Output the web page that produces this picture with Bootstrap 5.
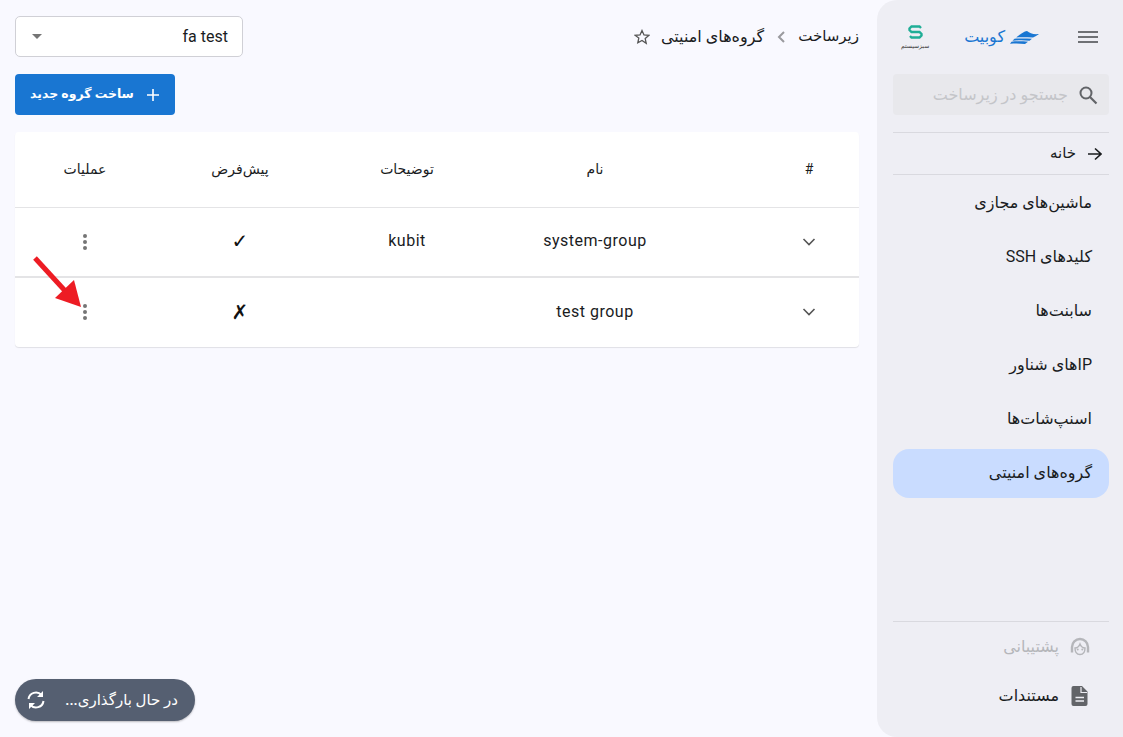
<!DOCTYPE html>
<html lang="fa" dir="rtl">
<head>
  <meta charset="UTF-8" />
  <meta name="viewport" content="width=device-width, initial-scale=1.0"/>
  <title>گروه‌های امنیتی</title>
  <link href="https://cdn.jsdelivr.net/npm/bootstrap@5.3.3/dist/css/bootstrap.min.css" rel="stylesheet">
  <style>
    html, body { height: 100%; }
    body { background: #f9f9ff; color: #1a1c1e; font-family: Roboto, "DejaVu Sans", sans-serif; font-size: 14px; overflow: hidden; }
    .app-shell { height: 737px; position: relative; }
    .side-panel { width: 246px; flex: none; background: #eeeef4; border-top-left-radius: 20px; border-bottom-left-radius: 20px; padding: 0 14px 17px 16px; }
    .side-head { height: 74px; }
    .menu-btn { margin-right: 11px; margin-left: 39px; }
    .brand-name { color: #1976d2; font-weight: 500; font-size: 16px; white-space: nowrap; }
    .partner-logo { margin-right: 37px; width: 24px; }
    .partner-name { font-size: 6px; line-height: 6px; color: #333; white-space: nowrap; }
    .search-box { height: 41px; background: #e8e8ec; border-radius: 4px; padding: 0 11px; gap: 10px; color: #c4c5c9; font-size: 16px; white-space: nowrap; }
    .side-rule { border-top: 1px solid #d9d9df; }
    .home-link { height: 41px; padding-right: 7px; gap: 11px; font-size: 15px; color: #1a1c1e; }
    .side-nav { margin-top: -1px; }
    .side-item { display: block; height: 49px; line-height: 48px; margin: 5px 0; padding-right: 17px; border-radius: 16px; color: #1a1c1e; font-size: 16px; text-decoration: none; }
    .side-item.is-active { background: #c9dcff; }
    .foot-row { height: 48px; padding-right: 19px; gap: 11px; font-size: 16px; color: #1a1c1e; }
    .foot-row.is-off { color: #b5b6ba; height: 50px; }
    .main-pane { padding: 16px 18px 0 15px; min-width: 0; }
    .top-bar { height: 41px; }
    .crumb-text { font-size: 15px; color: #1a1c1e; gap: 13px; }
    .crumb-now { font-size: 16px; }
    .crumb-star { margin-right: -2px; }
    .scope-select { width: 228px; height: 41px; background: #fff; border: 1px solid #d0d0d6; border-radius: 5px; padding: 0 14px; font-size: 16px; }
    .caret-down { width: 0; height: 0; border-left: 5px solid transparent; border-right: 5px solid transparent; border-top: 5px solid #757575; margin-left: 2px; }
    .new-btn { width: 160px; height: 41px; background: #1976d2; border: 0; border-radius: 4px; color: #fff; font-size: 12.500px; font-weight: 600; margin-top: 17px; margin-bottom: 17px; padding: 0; white-space: nowrap; gap: 12px; }
    .new-btn:hover { background: #1976d2; color: #fff; }
    .group-card { background: #fff; border-radius: 4px; box-shadow: 0 1px 1px rgba(0,0,0,.1); overflow: hidden; }
    .group-table { table-layout: fixed; margin: 0; width: 844px; font-size: 16px; --bs-table-bg: transparent; color: #1a1c1e; }
    .group-table th { height: 75px; font-weight: 400; font-size: 14px; vertical-align: middle; text-align: center; padding: 0; border-bottom: 1px solid #e4e4e6; }
    .group-table td { height: 70px; vertical-align: middle; text-align: center; padding: 0 0 2px; border-bottom: 2px solid #e4e4e6; }
    .group-table tr:last-child td { border-bottom: 0; }
    .group-table .col-index { padding-left: 58px; }
    .latin-cell { letter-spacing: .5px; }
    .mark-cell { font-family: "DejaVu Sans", sans-serif; font-size: 20px; color: #111; }
    .status-pill { position: absolute; left: 15px; top: 679px; width: 180px; height: 42px; background: #555f71; border-radius: 21px; color: #fff; font-size: 15px; font-weight: 500; padding: 0 17px 0 11px; box-shadow: 0 1px 2px rgba(0,0,0,.25); white-space: nowrap; }
    .red-arrow { position: absolute; left: 30px; top: 253px; }
  </style>
</head>
<body>
  <div class="app-shell d-flex">
    <aside class="side-panel d-flex flex-column">
      <div class="side-head d-flex align-items-center">
        <svg class="menu-btn" width="20" height="14" viewBox="0 0 20 14"><path d="M0 2h20M0 7h20M0 12h20" stroke="#6f7175" stroke-width="2"/></svg>
        <div class="d-flex align-items-center gap-1">
          <svg width="30" height="15" viewBox="0 0 30 15"><path d="M30 4C24 4.500 21 3.500 18 1 15 1.500 13 3 11 4.500L7 7.500c6-.5 12 0 17 0 2-1 4-2 6-3.500z" fill="#1976d2"/><path d="M5.500 8.700c6-.5 12-.2 17.500 0l-2.500 2C15 10 10 10 3.500 10.700zM2.500 11.700c5-.5 10-.5 16.500 0L16 14c-5-.7-10-.7-15-.3z" fill="#1976d2"/></svg>
          <span class="brand-name">کوبیت</span>
        </div>
        <div class="partner-logo d-flex flex-column align-items-center">
          <svg width="15" height="14" viewBox="0 0 15 14"><path d="M13 3 11.500 1.500H3.500L1.500 3.500v1.500L3.500 7h8l2 2v1.500l-2 2H3.500L2 11" fill="none" stroke="#1fae96" stroke-width="2.400"/></svg>
          <span class="partner-name mt-1">سبزسیستم</span>
        </div>
      </div>
      <div class="search-box d-flex align-items-center">
        <svg width="20" height="20" viewBox="0 0 20 20"><circle cx="8" cy="8" r="5.500" fill="none" stroke="#626468" stroke-width="2"/><path d="m12 12 6.500 6.500" stroke="#626468" stroke-width="2.200"/></svg>
        <span>جستجو در زیرساخت</span>
      </div>
      <div class="side-rule" style="margin-top:17px"></div>
      <div class="home-link d-flex align-items-center">
        <svg width="15" height="14" viewBox="0 0 15 14"><path d="M1 7h13M8 1.500 14 7l-6 5.500" fill="none" stroke="#1a1c1e" stroke-width="1.600"/></svg>
        <span>خانه</span>
      </div>
      <div class="side-rule"></div>
      <nav class="side-nav flex-grow-1">
        <a class="side-item" href="#">ماشین‌های مجازی</a>
        <a class="side-item" href="#">کلیدهای SSH</a>
        <a class="side-item" href="#">سابنت‌ها</a>
        <a class="side-item" href="#">IPهای شناور</a>
        <a class="side-item" href="#">اسنپ‌شات‌ها</a>
        <a class="side-item is-active" href="#">گروه‌های امنیتی</a>
      </nav>
      <div class="side-rule"></div>
      <div>
        <div class="foot-row is-off d-flex align-items-center">
          <svg width="20" height="20" viewBox="0 0 20 20"><path d="M2 15.500V10a8 8 0 0 1 16 0v5.500" fill="none" stroke="#b5b6ba" stroke-width="2.400"/><path d="M5 11c2 0 4-1.500 5-4 1 2.500 3 4 5 4 0 4-2 6.500-5 6.500S5 15 5 11z" fill="none" stroke="#b5b6ba" stroke-width="1.400"/><circle cx="7.700" cy="12.500" r="1" fill="#b5b6ba"/><circle cx="12.300" cy="12.500" r="1" fill="#b5b6ba"/></svg>
          <span>پشتیبانی</span>
        </div>
        <div class="foot-row d-flex align-items-center">
          <svg width="20" height="20" viewBox="0 0 20 20"><path d="M3.500 0H12l5.500 5.500V18a2 2 0 0 1-2 2h-12a2 2 0 0 1-2-2V2a2 2 0 0 1 2-2z" fill="#626468"/><path d="M11 1v5.500h6" fill="none" stroke="#eeeef4" stroke-width="1.200"/><path d="M5.500 11.500h8.500M5.500 15h8.500" stroke="#eeeef4" stroke-width="1.600"/></svg>
          <span>مستندات</span>
        </div>
      </div>
    </aside>

    <main class="main-pane flex-grow-1">
      <div class="top-bar d-flex align-items-center justify-content-between">
        <div class="crumb-text d-flex align-items-center">
          <span>زیرساخت</span>
          <svg width="8" height="12" viewBox="0 0 8 12"><path d="M7 1 2 6l5 5" fill="none" stroke="#9a9a9e" stroke-width="2"/></svg>
          <span class="crumb-now">گروه‌های امنیتی</span>
          <svg class="crumb-star" width="16" height="16" viewBox="0 0 16 16"><path d="m8 1.500 2 4.400 4.800.5-3.600 3.200 1 4.700L8 11.400 3.800 13.800l1-4.700L1.200 6.400 6 5.900z" fill="none" stroke="#555" stroke-width="1.300"/></svg>
        </div>
        <div class="scope-select d-flex align-items-center justify-content-between">
          <span>fa test</span>
          <span class="caret-down"></span>
        </div>
      </div>
      <div class="d-flex justify-content-end">
        <button class="btn new-btn d-flex align-items-center justify-content-center" type="button">
          <svg width="14" height="14" viewBox="0 0 14 14"><path d="M7 1v12M1 7h12" stroke="#fff" stroke-width="1.600"/></svg>
          <span>ساخت گروه جدید</span>
        </button>
      </div>
      <div class="group-card">
        <table class="table group-table">
          <colgroup>
            <col style="width:158px"><col style="width:212px"><col style="width:164px"><col style="width:170px"><col style="width:140px">
          </colgroup>
          <thead>
            <tr><th class="col-index">#</th><th>نام</th><th>توضیحات</th><th>پیش‌فرض</th><th>عملیات</th></tr>
          </thead>
          <tbody>
            <tr>
              <td class="col-index"><svg width="14" height="8" viewBox="0 0 14 8"><path d="m1.500 1 5.500 5.500L12.500 1" fill="none" stroke="#555" stroke-width="1.600"/></svg></td>
              <td class="latin-cell">system-group</td>
              <td class="latin-cell">kubit</td>
              <td class="mark-cell">✓</td>
              <td><svg width="6" height="18" viewBox="0 0 6 18"><circle cx="3" cy="3" r="2" fill="#757575"/><circle cx="3" cy="9" r="2" fill="#757575"/><circle cx="3" cy="15" r="2" fill="#757575"/></svg></td>
            </tr>
            <tr>
              <td class="col-index"><svg width="14" height="8" viewBox="0 0 14 8"><path d="m1.500 1 5.500 5.500L12.500 1" fill="none" stroke="#555" stroke-width="1.600"/></svg></td>
              <td class="latin-cell">test group</td>
              <td></td>
              <td class="mark-cell">✗</td>
              <td><svg width="6" height="18" viewBox="0 0 6 18"><circle cx="3" cy="3" r="2" fill="#757575"/><circle cx="3" cy="9" r="2" fill="#757575"/><circle cx="3" cy="15" r="2" fill="#757575"/></svg></td>
            </tr>
          </tbody>
        </table>
      </div>
    </main>

    <svg class="red-arrow" width="56" height="58" viewBox="0 0 56 58"><path d="M5 5 38 41" stroke="#ed1c24" stroke-width="5"/><path d="M51 54 25 45 44 27z" fill="#ed1c24"/></svg>

    <div class="status-pill d-flex align-items-center justify-content-between">
      <span>در حال بارگذاری...</span>
      <svg width="20" height="20" viewBox="0 0 20 20"><path d="M2.500 9a7.500 7.500 0 0 1 13-4M17.500 11a7.500 7.500 0 0 1-13 4" fill="none" stroke="#fff" stroke-width="2"/><path d="M17 1v6h-6zM3 19v-6h6z" fill="#fff"/></svg>
    </div>
  </div>
</body>
</html>
